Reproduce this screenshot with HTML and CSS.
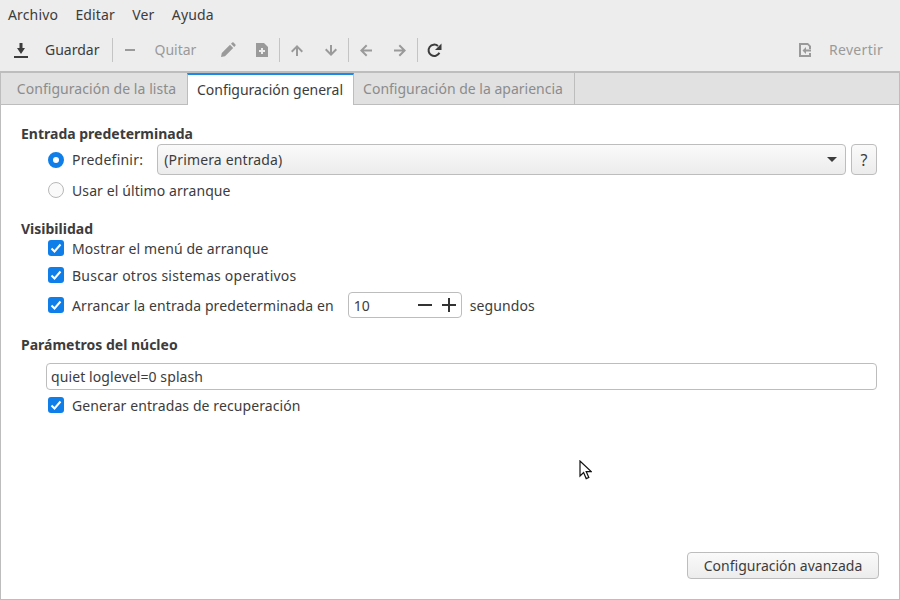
FILE: index.html
```html
<!DOCTYPE html>
<html lang="es">
<head>
  <meta charset="UTF-8" />
  <title>Configuración de GRUB</title>
  <link rel="stylesheet" href="styles.css">
</head>
<body>

<div class="window">
  <!-- Menu -->
  <div class="menubar">
    <span>Archivo</span>
    <span>Editar</span>
    <span>Ver</span>
    <span>Ayuda</span>
  </div>

  <!-- Toolbar -->
  <div class="toolbar">
    <div class="tool tool-save">
      <svg class="icon" viewBox="0 0 16 16"><path d="M6.500 1h3v5H12L8 12 4 6h2.500z" fill="#3c3c3c"/><rect x="1" y="14" width="14" height="2" fill="#3c3c3c"/></svg>
      <span class="tool-label">Guardar</span>
    </div>
    <div class="sep"></div>
    <div class="tool tool-remove off">
      <svg class="icon" viewBox="0 0 16 16"><rect x="3" y="7" width="10" height="2" fill="#9a9a9a"/></svg>
      <span class="tool-label">Quitar</span>
    </div>
    <div class="tool tool-edit">
      <svg class="icon" viewBox="0 0 16 16"><path d="M1 15l.8-4L10 2.800 13.200 6 5 14.200zM11 1.800l1.200-1.200a1 1 0 0 1 1.400 0l1.800 1.800a1 1 0 0 1 0 1.400L14.200 5z" fill="#9a9a9a"/></svg>
    </div>
    <div class="tool tool-new">
      <svg class="icon" viewBox="0 0 16 16"><path fill-rule="evenodd" d="M2 1h8l4 4v10H2zM7 6v2H5v2h2v2h2v-2h2V8H9V6z" fill="#9a9a9a"/></svg>
    </div>
    <div class="sep"></div>
    <div class="tool tool-arrow">
      <svg class="icon" viewBox="0 0 16 16"><path d="M8 3l6 6-1.400 1.400L9 6.800V14H7V6.800L3.400 10.400 2 9z" fill="#9a9a9a"/></svg>
    </div>
    <div class="tool tool-arrow">
      <svg class="icon" viewBox="0 0 16 16"><path d="M8 14l6-6-1.400-1.400L9 10.200V3H7v7.200L3.400 6.600 2 8z" fill="#9a9a9a"/></svg>
    </div>
    <div class="sep"></div>
    <div class="tool tool-arrow">
      <svg class="icon" viewBox="0 0 16 16"><path d="M2 8.500l6-6 1.400 1.400L5.800 7.500H14v2H5.800l3.600 3.600L8 14.500z" fill="#9a9a9a"/></svg>
    </div>
    <div class="tool tool-arrow">
      <svg class="icon" viewBox="0 0 16 16"><path d="M14 8.500l-6-6-1.400 1.400 3.600 3.600H2v2h8.200l-3.600 3.600L8 14.500z" fill="#9a9a9a"/></svg>
    </div>
    <div class="sep"></div>
    <div class="tool tool-reload">
      <svg class="icon" viewBox="0 0 16 16"><path d="M13.400 10.800A5.700 5.700 0 1 1 12 4" fill="none" stroke="#3c3c3c" stroke-width="2"/><path d="M15.500 1.500v6.500H9z" fill="#3c3c3c"/></svg>
    </div>
    <div class="tool tool-revert off">
      <svg class="icon" viewBox="0 0 16 16"><path fill-rule="evenodd" d="M2 1h9l3 3v3h-2V4.500L10.500 3H4v10h8v-2h2v4H2zM9 5v2.500h5v2H9V12L5.500 8.500z" fill="#9a9a9a"/></svg>
      <span class="tool-label">Revertir</span>
    </div>
  </div>

  <!-- Pestañas -->
  <div class="notebook">
    <div class="tabs">
      <div class="tab tab-list">Configuración de la lista</div>
      <div class="tab tab-active">Configuración general</div>
      <div class="tab tab-look">Configuración de la apariencia</div>
    </div>

    <div class="page">
      <section class="group group-default">
        <h2 class="group-title">Entrada predeterminada</h2>
        <div class="row row-select">
          <span class="radio checked"></span>
          <span class="label label-wide">Predefinir:</span>
          <div class="select">
            <span class="select-text">(Primera entrada)</span>
            <span class="caret"></span>
          </div>
          <div class="help">?</div>
        </div>
        <div class="row row-last">
          <span class="radio"></span>
          <span class="label">Usar el último arranque</span>
        </div>
      </section>

      <section class="group group-visible">
        <h2 class="group-title">Visibilidad</h2>
        <div class="row row-check row-first">
          <span class="check"><svg viewBox="0 0 16 16"><path d="M3.500 8.500L6.500 11.500 12.500 4.500" fill="none" stroke="#fff" stroke-width="2"/></svg></span>
          <span class="label">Mostrar el menú de arranque</span>
        </div>
        <div class="row row-check">
          <span class="check"><svg viewBox="0 0 16 16"><path d="M3.500 8.500L6.500 11.500 12.500 4.500" fill="none" stroke="#fff" stroke-width="2"/></svg></span>
          <span class="label label-wide">Buscar otros sistemas operativos</span>
        </div>
        <div class="row row-timeout">
          <span class="check"><svg viewBox="0 0 16 16"><path d="M3.500 8.500L6.500 11.500 12.500 4.500" fill="none" stroke="#fff" stroke-width="2"/></svg></span>
          <span class="label">Arrancar la entrada predeterminada en</span>
          <div class="spin">
            <span class="spin-value">10</span>
            <svg class="spin-btn" viewBox="0 0 14 14"><rect x="0" y="6" width="14" height="2" fill="#333"/></svg>
            <svg class="spin-btn" viewBox="0 0 14 14"><path d="M0 6h6V0h2v6h6v2H8v6H6V8H0z" fill="#333"/></svg>
          </div>
          <span class="label">segundos</span>
        </div>
      </section>

      <section class="group group-kernel">
        <h2 class="group-title">Parámetros del núcleo</h2>
        <div class="entry">quiet loglevel=0 splash</div>
        <div class="row row-recover">
          <span class="check"><svg viewBox="0 0 16 16"><path d="M3.500 8.500L6.500 11.500 12.500 4.500" fill="none" stroke="#fff" stroke-width="2"/></svg></span>
          <span class="label">Generar entradas de recuperación</span>
        </div>
      </section>

      <div class="page-foot">
        <div class="btn-advanced">Configuración avanzada</div>
      </div>

      <svg class="cursor" viewBox="0 0 13 20"><path d="M1 1v15l3.600-3.400 2.600 6 2.600-1.100-2.600-5.900h5z" fill="#fff" stroke="#111" stroke-width="1.200"/></svg>
    </div>
  </div>
</div>

</body>
</html>
```

FILE: styles.css
```css
* {
  box-sizing: border-box;
}
body {
  margin: 0;
  background-color: #ededed;
  color: #3c3c3c;
  font-family: 'Noto Sans', sans-serif;
  font-size: 14px;
  overflow: hidden;
}
.window {
  display: flex;
  flex-direction: column;
  width: 900px;
  height: 600px;
}

/* Menu */
.menubar {
  display: flex;
  gap: 17.3px;
  height: 28px;
  padding: 0 8px;
  align-items: center;
  letter-spacing: .15px;
}

/* Toolbar */
.toolbar {
  display: flex;
  align-items: center;
  height: 43px;
  padding: 0 17px 0 13px;
}
.tool {
  display: flex;
  align-items: center;
}
.tool-label {
  margin-left: 16px;
}
.off .tool-label {
  color: #9a9a9a;
}
.icon {
  display: block;
  width: 16px;
  height: 16px;
}
.sep {
  width: 1px;
  height: 24px;
  margin: 0 9px;
  background-color: #c4c4c4;
}
.tool-save + .sep {
  margin-left: 13px;
}
.tool-edit {
  margin-left: 24px;
}
.tool-new {
  margin-left: 18px;
}
.tool-arrow + .tool-arrow {
  margin-left: 18px;
}
.tool-reload {
  margin-left: -1px;
}
.tool-revert {
  margin-left: auto;
  letter-spacing: .3px;
}

/* Pestañas */
.notebook {
  flex: 1;
  display: flex;
  flex-direction: column;
  border: 1px solid #bdbdbd;
  border-top-width: 2px;
}
.tabs {
  display: flex;
  height: 32px;
  background-color: #e1e1e1;
  border-bottom: 1px solid #bdbdbd;
}
.tab {
  display: flex;
  align-items: center;
  justify-content: center;
  color: #8c8c8c;
  border-right: 1px solid #bdbdbd;
}
.tab-list {
  width: 186px;
  padding-left: 5px;
  border-right: 0;
  letter-spacing: .05px;
}
.tab-active {
  width: 167px;
  height: 32px;
  padding: 0 1px 2px 0;
  color: #3c3c3c;
  background-color: #fff;
  border-top: 2px solid #1e88e5;
  border-left: 1px solid #bdbdbd;
}
.tab-look {
  width: 221px;
  padding-right: 2px;
}

/* Pagina */
.page {
  flex: 1;
  position: relative;
  display: flex;
  flex-direction: column;
  padding: 20px 22px 0 20px;
  background-color: #fff;
}
.group-title {
  margin: 0;
  font-size: 14px;
  font-weight: 700;
  line-height: 18px;
}
.group-visible {
  margin-top: 21px;
}
.group-kernel {
  margin-top: 18px;
}
.row {
  display: flex;
  align-items: center;
  padding-left: 27px;
}
.row-select {
  height: 31px;
  margin-top: 1px;
}
.row-last {
  height: 18px;
  margin-top: 6px;
}
.row-check {
  height: 18px;
  margin-top: 9px;
}
.row-first {
  margin-top: 1px;
}
.row-timeout {
  height: 26px;
  margin-top: 8px;
}
.row-recover {
  height: 18px;
  margin-top: 6px;
}
.label {
  margin-left: 8px;
  letter-spacing: .1px;
}
.label-wide {
  letter-spacing: .24px;
}
.radio {
  width: 16px;
  height: 16px;
  border: 1px solid #b8b8b8;
  border-radius: 50%;
  background-color: #fafafa;
}
.radio.checked {
  border: 5px solid #0f7ee8;
  background-color: #fff;
}
.check {
  display: block;
  width: 16px;
  height: 16px;
  border-radius: 3px;
  background-color: #0f7ee8;
}
.check svg {
  display: block;
}
.select {
  flex: 1;
  display: flex;
  align-items: center;
  justify-content: space-between;
  height: 31px;
  margin-left: 14px;
  padding: 0 7px 0 6px;
  border: 1px solid #bdbdbd;
  border-radius: 4px;
  background: linear-gradient(#fafafa, #ececec);
}
.select-text {
  letter-spacing: .15px;
}
.caret {
  width: 0;
  height: 0;
  margin-right: 1px;
  border-left: 5px solid transparent;
  border-right: 5px solid transparent;
  border-top: 5px solid #3c3c3c;
}
.help {
  display: flex;
  align-items: center;
  justify-content: center;
  width: 26px;
  height: 31px;
  margin-left: 5px;
  border: 1px solid #bdbdbd;
  border-radius: 4px;
  background: linear-gradient(#fafafa, #ececec);
  font-size: 16px;
}
.spin {
  display: flex;
  align-items: center;
  gap: 10px;
  width: 114px;
  height: 26px;
  margin-left: 14px;
  padding: 0 5px;
  border: 1px solid #bdbdbd;
  border-radius: 4px;
}
.spin-value {
  flex: 1;
}
.spin-btn {
  display: block;
  width: 14px;
  height: 14px;
}
.entry {
  height: 27px;
  margin: 9px 0 0 25px;
  padding: 0 4px;
  line-height: 25px;
  letter-spacing: .1px;
  border: 1px solid #bdbdbd;
  border-radius: 4px;
}
.page-foot {
  margin-top: auto;
  padding-bottom: 20px;
  display: flex;
  justify-content: flex-end;
}
.btn-advanced {
  display: flex;
  align-items: center;
  justify-content: center;
  width: 192px;
  height: 27px;
  margin-right: -2px;
  border: 1px solid #bdbdbd;
  border-radius: 4px;
  background: linear-gradient(#fafafa, #ececec);
}
.cursor {
  position: absolute;
  left: 578px;
  top: 355px;
  width: 13px;
  height: 20px;
}
```
